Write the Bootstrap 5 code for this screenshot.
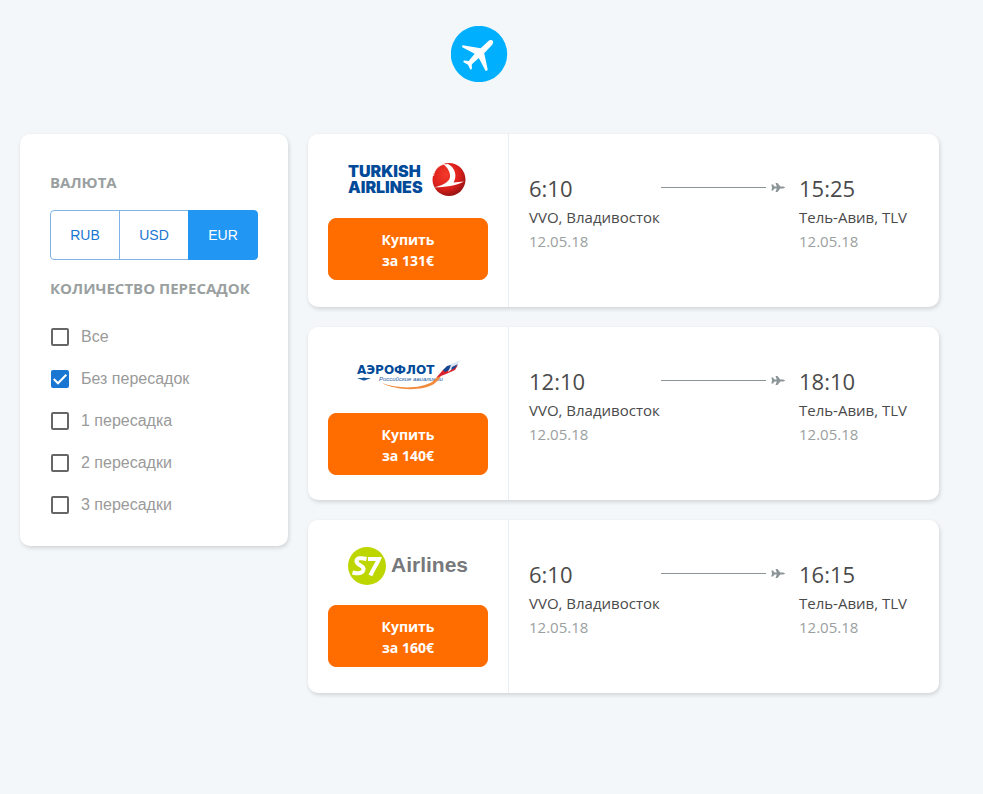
<!DOCTYPE html>
<html lang="ru">
<head>
<meta charset="utf-8">
<meta name="viewport" content="width=device-width, initial-scale=1">
<title>Авиабилеты</title>
<link href="https://cdn.jsdelivr.net/npm/bootstrap@5.3.0/dist/css/bootstrap.min.css" rel="stylesheet">
<style>
body { background: #f3f7fa; color: #4a4a4a; font-family: "Segoe UI", "Open Sans", "Noto Sans", sans-serif; font-size: 15px; line-height: 24px; }
.page { padding: 26px 44px 20px 20px; }
.brand { margin-bottom: 52px; }
.gap-20 { gap: 20px; }
.panel { background: #fff; border-radius: 10px; box-shadow: 1px 2px 4px rgba(0, 0, 0, .14); }
.filters { flex: 0 0 268px; padding: 36px 30px 20px; }
.filters h2 { font-size: 15px; line-height: 24px; font-weight: 700; color: #9aa0a0; text-transform: uppercase; white-space: nowrap; }
.currency { margin: 16px 0; }
.currency .btn { flex: 1 1 0; height: 50px; padding: 0; font: 14px "Liberation Sans", Arial, sans-serif; color: #1976d2; border-color: #80b3e6; border-radius: 4px; }
.currency .btn.active { background: #2196f3; border-color: #2196f3; color: #fff; }
.stops { margin-top: 16px; font: 16px/24px "Liberation Sans", Arial, sans-serif; color: #9a9a9a; }
.stops label { height: 42px; padding-left: 1px; gap: 12px; }
.stops .form-check-input { width: 18px; height: 18px; margin: 0; border: 2px solid #666; border-radius: 2px; }
.stops .form-check-input:checked { background-color: #1976d2; border-color: #1976d2; background-size: 18px; background-image: url("data:image/svg+xml,%3Csvg xmlns='http://www.w3.org/2000/svg' viewBox='0 0 18 18'%3E%3Cpath d='M2.700 9L7 13.300L15.300 4.700' fill='none' stroke='%23fff' stroke-width='2'/%3E%3C/svg%3E"); }
.ticket { min-height: 173px; }
.offer { flex: 0 0 201px; padding: 20px 20px 25px; border-right: 1px solid #e9eef2; }
.logo-box { margin-bottom: 20px; }
.btn-buy { --bs-btn-color: #fff; --bs-btn-bg: #ff6d00; --bs-btn-border-color: #ff6d00; --bs-btn-hover-color: #fff; --bs-btn-hover-bg: #f06400; --bs-btn-hover-border-color: #f06400; padding: 10px 9px 8px; font-size: 14px; line-height: 21px; font-weight: 700; border-radius: 8px; }
.flight { padding: 39px 20px; }
.place { flex: 0 0 132px; white-space: nowrap; }
.place-to { flex-basis: 120px; }
.hour { font-size: 22px; line-height: 30px; margin-bottom: 2px; }
.day { color: #9aa0a0; }
.route { height: 29px; gap: 5px; padding-right: 14px; color: #8b9497; }
.route-line { height: 1px; background: #8b9497; }
</style>
</head>
<body>
<svg class="d-none" xmlns="http://www.w3.org/2000/svg">
  <symbol id="plane" viewBox="0 0 14 11"><path fill="currentColor" d="M.3 2.500H2L3.500 4.500H5.800L4.500 1H6.500L9.300 4.500H12Q14 4.900 14 5.500T12 6.500H9.300L6.500 10H4.500L5.800 6.500H3.500L2 8.500H.3L1.100 5.500Z"/></symbol>
</svg>
<div class="page">
  <header class="brand d-flex justify-content-center">
    <a href="#" aria-label="Главная" class="d-block lh-1">
      <svg width="57" height="56" viewBox="0 0 57 56" class="d-block"><circle cx="28" cy="28" r="28.200" fill="#00b0ff"/><path fill="#fff" d="M41.700 14.800C40.500 13.400 38.200 14.300 37.200 15.300L29.700 22.300L11.500 19.200Q10.800 19.700 11.300 21.200L23.700 27.700L17.700 35L12.900 34.400Q12 35.200 12.600 36.200L17 38.700L19.300 43.500Q20.400 43.700 20.900 42.800L20.800 38.200L27.800 32L34.700 45Q36.600 45 36.700 43.600L33.200 27.200L40.500 19.500C42 18 42.700 16.200 41.700 14.800Z"/></svg>
    </a>
  </header>
  <div class="d-flex align-items-start gap-20">
    <aside class="panel filters">
      <h2 class="m-0">Валюта</h2>
      <div class="currency btn-group d-flex" role="group" aria-label="Валюта">
        <button type="button" class="btn">RUB</button>
        <button type="button" class="btn">USD</button>
        <button type="button" class="btn active" aria-pressed="true">EUR</button>
      </div>
      <h2 class="m-0">Количество пересадок</h2>
      <div class="stops">
        <label class="d-flex align-items-center" for="s-all"><input class="form-check-input" type="checkbox" id="s-all">Все</label>
        <label class="d-flex align-items-center" for="s-0"><input class="form-check-input" type="checkbox" id="s-0" checked>Без пересадок</label>
        <label class="d-flex align-items-center" for="s-1"><input class="form-check-input" type="checkbox" id="s-1">1 пересадка</label>
        <label class="d-flex align-items-center" for="s-2"><input class="form-check-input" type="checkbox" id="s-2">2 пересадки</label>
        <label class="d-flex align-items-center" for="s-3"><input class="form-check-input" type="checkbox" id="s-3">3 пересадки</label>
      </div>
    </aside>
    <main class="d-flex flex-column flex-grow-1 gap-20">
      <article class="panel ticket d-flex">
        <div class="offer">
          <div class="logo-box d-flex justify-content-center">
            <svg width="120" height="44" viewBox="0 0 120 44" role="img" aria-label="Turkish Airlines">
              <defs><radialGradient id="red" cx=".4" cy=".35" r=".7"><stop offset="0" stop-color="#f33a2a"/><stop offset=".6" stop-color="#dc1f1b"/><stop offset="1" stop-color="#8f1313"/></radialGradient></defs>
              <g fill="#004a99" font-family="Inter, sans-serif" font-weight="900" font-size="16"><text x="0" y="23">TURKISH</text><text x="0" y="39">AIRLINES</text></g>
              <circle cx="101" cy="25.500" r="16.500" fill="url(#red)"/><path fill="#fff" d="M95.500 10.500C100 13.500 102.500 19 102 23C101.500 27 97 30.500 86.500 33.500C97 33 108 32 116 27.500L105.500 28.500C109 23 108 14 100 10Z"/><path fill="none" stroke="#fff" stroke-width=".8" d="M85.500 22C86.500 15 91 11 97 10"/>
            </svg>
          </div>
          <button type="button" class="btn btn-buy w-100">Купить<br>за 131€</button>
        </div>
        <div class="flight d-flex flex-grow-1">
          <div class="place"><div class="hour">6:10</div><div>VVO, Владивосток</div><div class="day">12.05.18</div></div>
          <div class="route d-flex align-items-center flex-grow-1"><div class="route-line flex-grow-1"></div><svg width="14" height="11"><use href="#plane"/></svg></div>
          <div class="place place-to"><div class="hour">15:25</div><div>Тель-Авив, TLV</div><div class="day">12.05.18</div></div>
        </div>
      </article>
      <article class="panel ticket d-flex">
        <div class="offer">
          <div class="logo-box d-flex justify-content-center">
            <svg width="120" height="46" viewBox="0 0 120 46" role="img" aria-label="Аэрофлот">
              <text x="9" y="27" fill="#004a99" font-family="DejaVu Sans, sans-serif" font-weight="700" font-size="12">АЭРОФЛОТ</text>
              <path fill="#17599f" d="M9 31H14Q16 29.800 18 31H23L19 32.500Q16 34.500 13 32.500Z"/>
              <text x="31" y="34" fill="#17599f" font-family="Liberation Sans, sans-serif" font-style="italic" font-size="6">Российские авиалинии</text>
              <path fill="#f28a3c" d="M34 36C50 42 72 42 84 35C89 31 90 29 94 26C93 30 90 34 86 37C73 44.500 48 43.500 34 36Z"/>
              <path fill="#dce6f2" d="M92 26L101 18L113 13L107 20Z"/><path fill="#d9232e" d="M88 31L95 23L101 21L100 25L110 18L107 23L98 27Z"/><path fill="#17458f" d="M95 23L99 19L103 18L101 23L97 25ZM104 20L110 17L107 21L103 23Z"/>
            </svg>
          </div>
          <button type="button" class="btn btn-buy w-100">Купить<br>за 140€</button>
        </div>
        <div class="flight d-flex flex-grow-1">
          <div class="place"><div class="hour">12:10</div><div>VVO, Владивосток</div><div class="day">12.05.18</div></div>
          <div class="route d-flex align-items-center flex-grow-1"><div class="route-line flex-grow-1"></div><svg width="14" height="11"><use href="#plane"/></svg></div>
          <div class="place place-to"><div class="hour">18:10</div><div>Тель-Авив, TLV</div><div class="day">12.05.18</div></div>
        </div>
      </article>
      <article class="panel ticket d-flex">
        <div class="offer">
          <div class="logo-box d-flex justify-content-center">
            <svg width="120" height="45" viewBox="0 0 120 45" role="img" aria-label="S7 Airlines">
              <circle cx="19" cy="26" r="19" fill="#bed600"/>
              <path fill="none" stroke="#fff" stroke-width="4" d="M18.500 19C13 17.500 8.500 18 8.500 21.200C8.500 25.500 16.500 25 15.500 29.500C14.800 33.500 10 34 4.500 32.500M20 19H31C29 24 25 29 22.500 35.500"/>
              <text x="43" y="32" fill="#77787b" font-family="Liberation Sans, sans-serif" font-weight="700" font-size="21">Airlines</text>
            </svg>
          </div>
          <button type="button" class="btn btn-buy w-100">Купить<br>за 160€</button>
        </div>
        <div class="flight d-flex flex-grow-1">
          <div class="place"><div class="hour">6:10</div><div>VVO, Владивосток</div><div class="day">12.05.18</div></div>
          <div class="route d-flex align-items-center flex-grow-1"><div class="route-line flex-grow-1"></div><svg width="14" height="11"><use href="#plane"/></svg></div>
          <div class="place place-to"><div class="hour">16:15</div><div>Тель-Авив, TLV</div><div class="day">12.05.18</div></div>
        </div>
      </article>
    </main>
  </div>
</div>
<script src="https://cdn.jsdelivr.net/npm/bootstrap@5.3.0/dist/js/bootstrap.bundle.min.js"></script>
</body>
</html>
